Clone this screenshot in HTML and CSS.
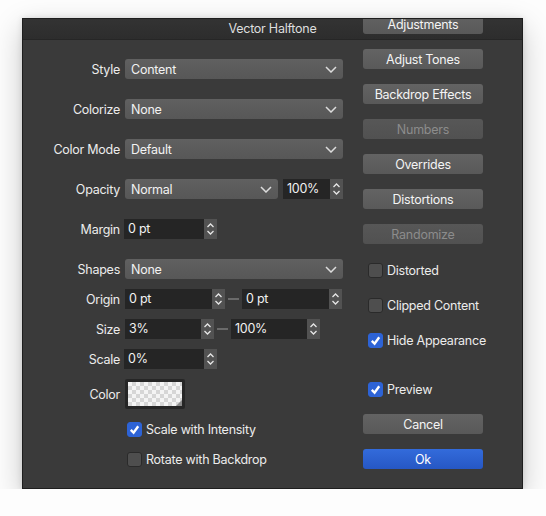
FILE: index.html
```html
<!DOCTYPE html>
<html lang="en">
<head>
    <meta charset="UTF-8">
    <title>Vector Halftone</title>
    <link rel="stylesheet" href="styles.css">
</head>
<body>
    <div class="dialog">
        <div class="titlebar">Vector Halftone</div>
        <div class="content">
            <div class="form">
                <div class="group wide">
                    <div class="row">
                        <span class="label">Style</span>
                        <div class="select full"><span>Content</span><svg class="chev" viewBox="0 0 12 7"><polyline points="1,1 6,6 11,1"/></svg></div>
                    </div>
                    <div class="row">
                        <span class="label">Colorize</span>
                        <div class="select full"><span>None</span><svg class="chev" viewBox="0 0 12 7"><polyline points="1,1 6,6 11,1"/></svg></div>
                    </div>
                    <div class="row">
                        <span class="label">Color Mode</span>
                        <div class="select full"><span>Default</span><svg class="chev" viewBox="0 0 12 7"><polyline points="1,1 6,6 11,1"/></svg></div>
                    </div>
                    <div class="row">
                        <span class="label">Opacity</span>
                        <div class="select opacity"><span>Normal</span><svg class="chev" viewBox="0 0 12 7"><polyline points="1,1 6,6 11,1"/></svg></div>
                        <div class="spin pct">
                            <span class="value">100%</span>
                            <span class="stepper"><svg viewBox="0 0 9 14"><polyline points="1.5,5 4.5,2 7.5,5"/><polyline points="1.5,9 4.5,12 7.5,9"/></svg></span>
                        </div>
                    </div>
                    <div class="row">
                        <span class="label">Margin</span>
                        <div class="spin short">
                            <span class="value">0 pt</span>
                            <span class="stepper"><svg viewBox="0 0 9 14"><polyline points="1.5,5 4.5,2 7.5,5"/><polyline points="1.5,9 4.5,12 7.5,9"/></svg></span>
                        </div>
                    </div>
                    <div class="row">
                        <span class="label">Shapes</span>
                        <div class="select full"><span>None</span><svg class="chev" viewBox="0 0 12 7"><polyline points="1,1 6,6 11,1"/></svg></div>
                    </div>
                </div>
                <div class="group tight">
                    <div class="row">
                        <span class="label">Origin</span>
                        <div class="spin pair">
                            <span class="value">0 pt</span>
                            <span class="stepper"><svg viewBox="0 0 9 14"><polyline points="1.5,5 4.5,2 7.5,5"/><polyline points="1.5,9 4.5,12 7.5,9"/></svg></span>
                        </div>
                        <span class="dash"></span>
                        <div class="spin pair">
                            <span class="value">0 pt</span>
                            <span class="stepper"><svg viewBox="0 0 9 14"><polyline points="1.5,5 4.5,2 7.5,5"/><polyline points="1.5,9 4.5,12 7.5,9"/></svg></span>
                        </div>
                    </div>
                    <div class="row">
                        <span class="label">Size</span>
                        <div class="spin size">
                            <span class="value">3%</span>
                            <span class="stepper"><svg viewBox="0 0 9 14"><polyline points="1.5,5 4.5,2 7.5,5"/><polyline points="1.5,9 4.5,12 7.5,9"/></svg></span>
                        </div>
                        <span class="dash"></span>
                        <div class="spin size">
                            <span class="value">100%</span>
                            <span class="stepper"><svg viewBox="0 0 9 14"><polyline points="1.5,5 4.5,2 7.5,5"/><polyline points="1.5,9 4.5,12 7.5,9"/></svg></span>
                        </div>
                    </div>
                    <div class="row">
                        <span class="label">Scale</span>
                        <div class="spin short">
                            <span class="value">0%</span>
                            <span class="stepper"><svg viewBox="0 0 9 14"><polyline points="1.5,5 4.5,2 7.5,5"/><polyline points="1.5,9 4.5,12 7.5,9"/></svg></span>
                        </div>
                    </div>
                    <div class="row tall">
                        <span class="label">Color</span>
                        <div class="swatch"><div class="checker"></div><span class="corner"></span></div>
                    </div>
                    <div class="row">
                        <span class="label"></span>
                        <label class="check"><span class="box on"><svg viewBox="0 0 14 14"><polyline points="3,7.5 6,10.5 11,3.5"/></svg></span>Scale with Intensity</label>
                    </div>
                    <div class="row">
                        <span class="label"></span>
                        <label class="check"><span class="box"></span>Rotate with Backdrop</label>
                    </div>
                </div>
            </div>

            <div class="side">
                <button class="btn">Adjustments</button>
                <button class="btn">Adjust Tones</button>
                <button class="btn">Backdrop Effects</button>
                <button class="btn disabled">Numbers</button>
                <button class="btn">Overrides</button>
                <button class="btn">Distortions</button>
                <button class="btn disabled">Randomize</button>
                <label class="check side-check first"><span class="box"></span>Distorted</label>
                <label class="check side-check"><span class="box"></span>Clipped Content</label>
                <label class="check side-check"><span class="box on"><svg viewBox="0 0 14 14"><polyline points="3,7.5 6,10.5 11,3.5"/></svg></span>Hide Appearance</label>
                <label class="check side-check preview"><span class="box on"><svg viewBox="0 0 14 14"><polyline points="3,7.5 6,10.5 11,3.5"/></svg></span>Preview</label>
                <button class="btn">Cancel</button>
                <button class="btn primary">Ok</button>
            </div>
        </div>
    </div>
</body>
</html>
```

FILE: styles.css
```css
/* Reset */
* {
    margin: 0;
    padding: 0;
    box-sizing: border-box;
}

body {
    background: #fdfdfd;
    font-family: "Inter", "Roboto", sans-serif;
    font-size: 12.5px;
    letter-spacing: -0.25px;
    color: #ececec;
}

/* Dialog window */
.dialog {
    width: 501px;
    height: 471px;
    margin: 18px 0 0 22px;
    background: #3a3a3a;
    border: 1px solid #1e1e1e;
    overflow: hidden;
    box-shadow: 0 10px 28px rgba(0, 0, 0, 0.22), 0 0 6px rgba(0, 0, 0, 0.12);
}

.titlebar {
    height: 21px;
    line-height: 20px;
    text-align: center;
    color: #dedede;
    background: linear-gradient(#333333, #2d2d2d);
    border-bottom: 1px solid #262626;
}

.content {
    display: flex;
    gap: 20px;
}

/* Left form */
.form {
    width: 320px;
    padding-top: 19px;
}

.group {
    display: flex;
    flex-direction: column;
}

.group.wide {
    gap: 20px;
}

.group.tight {
    gap: 10px;
    margin-top: 10px;
}

.row {
    display: flex;
    align-items: center;
    height: 20px;
}

.row.tall {
    height: 30px;
}

.label {
    width: 97px;
    margin-right: 5px;
    text-align: right;
    flex-shrink: 0;
}

/* Popup menus */
.select {
    height: 20px;
    display: flex;
    align-items: center;
    justify-content: space-between;
    padding: 0 6px;
    border-radius: 3px;
    background: linear-gradient(#606060, #575757);
    color: #f2f2f2;
}

.select.full {
    width: 218px;
}

.select.opacity {
    width: 153px;
    margin-right: 5px;
}

.chev {
    width: 12px;
    height: 7px;
    fill: none;
    stroke: #dcdcdc;
    stroke-width: 1.5;
}

/* Number fields */
.spin {
    height: 20px;
    display: flex;
    background: #252525;
}

.spin .value {
    flex: 1;
    padding-left: 4px;
    line-height: 20px;
    color: #f2f2f2;
}

.stepper {
    width: 13px;
    background: #525252;
    display: flex;
    align-items: center;
    justify-content: center;
}

.stepper svg {
    width: 9px;
    height: 14px;
    fill: none;
    stroke: #e6e6e6;
    stroke-width: 1.3;
}

.spin.pct {
    width: 60px;
}

.spin.short {
    width: 93px;
    margin-left: -1px;
}

.spin.pair {
    width: 100px;
}

.spin.size {
    width: 89px;
}

.dash {
    width: 11px;
    height: 2px;
    margin: 0 3px;
    background: #6a6a6a;
}

/* Color well */
.swatch {
    width: 60px;
    height: 30px;
    padding: 3px;
    border-radius: 2px;
    background: #262626;
    position: relative;
}

.checker {
    width: 100%;
    height: 100%;
    background-color: #f4f4f4;
    background-image:
        linear-gradient(45deg, #d6d6d6 25%, transparent 25%, transparent 75%, #d6d6d6 75%),
        linear-gradient(45deg, #d6d6d6 25%, transparent 25%, transparent 75%, #d6d6d6 75%);
    background-size: 8px 8px;
    background-position: 0 0, 4px 4px;
}

.corner {
    position: absolute;
    right: 3px;
    bottom: 3px;
    width: 0;
    height: 0;
    border-left: 6px solid transparent;
    border-bottom: 6px solid #8a8a8a;
}

/* Checkboxes */
.check {
    display: flex;
    align-items: center;
    white-space: nowrap;
    color: #ececec;
}

.box {
    width: 15px;
    height: 15px;
    margin: 0 4px 0 2px;
    border-radius: 3px;
    background: #4e4e4e;
    border: 1px solid #2a2a2a;
    display: flex;
    align-items: center;
    justify-content: center;
    flex-shrink: 0;
}

.box.on {
    background: #2d63d6;
    border-color: #2d63d6;
}

.box svg {
    width: 13px;
    height: 13px;
    fill: none;
    stroke: #ffffff;
    stroke-width: 2.6;
}

/* Right column */
.side {
    width: 120px;
    margin-top: -26px;
    display: flex;
    flex-direction: column;
    gap: 15px;
}

.btn {
    height: 20px;
    border: none;
    border-radius: 3px;
    background: linear-gradient(#636363, #595959);
    color: #f4f4f4;
    font-family: inherit;
    font-size: 12.5px;
    letter-spacing: -0.25px;
}

.btn.disabled {
    color: #8c8c8c;
    background: linear-gradient(#575757, #515151);
}

.btn.primary {
    background: linear-gradient(#336bdb, #2657c4);
    color: #ffffff;
}

.side-check {
    height: 20px;
}

.side-check .box {
    margin-left: 5px;
}

.side-check.first {
    margin-top: 1px;
}

.side-check.preview {
    margin-top: 14px;
}
```
